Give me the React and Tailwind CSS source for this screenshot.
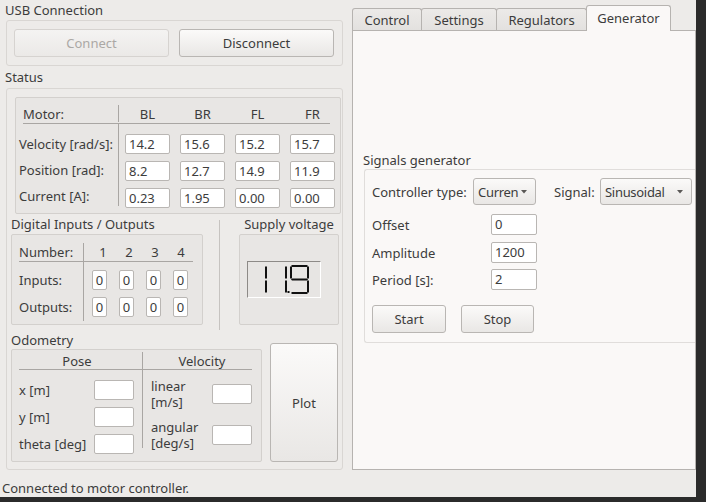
import React from "react";

function Btn({ children, className = "", disabled = false }) {
  return (
    <div
      className={`flex items-center justify-center rounded-[3px] border ${
        disabled
          ? "border-[#d6d3d0] text-[#aba8a5] bg-linear-to-b from-[#f4f3f2] to-[#ebe9e7]"
          : "border-[#b9b6b3] text-[#3c3c3c] bg-linear-to-b from-[#fbfaf9] to-[#e9e7e5]"
      } ${className}`}
    >
      {children}
    </div>
  );
}

function Field({ value = "", className = "", center = false }) {
  return (
    <div
      className={`bg-white border border-[#b9b6b3] rounded-[2px] flex items-center leading-none ${
        center ? "justify-center" : "pl-[3px]"
      } ${className}`}
    >
      {value}
    </div>
  );
}

function Combo({ text, className = "" }) {
  return (
    <div
      className={`h-[27px] flex items-center justify-between gap-[3px] rounded-[3px] border border-[#b9b6b3] bg-linear-to-b from-[#fbfaf9] to-[#e9e7e5] pl-[4px] ${className}`}
    >
      <span className="whitespace-nowrap tracking-[-0.3px]">{text}</span>
      <svg width="6" height="4" viewBox="0 0 6 4" className="shrink-0">
        <polygon points="0,0 6,0 3,3.5" fill="#5a5856" />
      </svg>
    </div>
  );
}

function V({ x, y1, y2 }) {
  return (
    <polygon
      points={`${x},${y1 + 1} ${x + 1},${y1} ${x + 2},${y1 + 1} ${x + 2},${y2 - 1} ${x + 1},${y2} ${x},${y2 - 1}`}
      fill="#111"
    />
  );
}
function H({ y, x1, x2 }) {
  return (
    <polygon
      points={`${x1 + 1},${y} ${x1},${y + 1} ${x1 + 1},${y + 2} ${x2 - 1},${y + 2} ${x2},${y + 1} ${x2 - 1},${y}`}
      fill="#111"
    />
  );
}

function LCD() {
  return (
    <div className="mt-[26px] ml-[7px] w-[74px] h-[37px] border border-t-[#8d8a87] border-l-[#8d8a87] border-r-white border-b-white bg-[#e7e5e3]">
      <svg width="72" height="35" viewBox="0 0 72 35">
        <V x={17} y1={4} y2={17} />
        <V x={17} y1={18} y2={31} />
        <V x={37} y1={4} y2={17} />
        <V x={37} y1={18} y2={31} />
        <rect x="39.5" y="29" width="2" height="2" fill="#111" />
        <H y={3} x1={43} x2={60} />
        <V x={42} y1={4} y2={17} />
        <V x={59} y1={4} y2={17} />
        <H y={16.5} x1={43} x2={60} />
        <V x={59} y1={18} y2={31} />
        <H y={30} x1={43} x2={60} />
      </svg>
    </div>
  );
}

const LINE = "bg-[#a9a6a3]";

function StatusTable() {
  const rows = [
    ["Velocity [rad/s]:", ["14.2", "15.6", "15.2", "15.7"]],
    ["Position [rad]:", ["8.2", "12.7", "14.9", "11.9"]],
    ["Current [A]:", ["0.23", "1.95", "0.00", "0.00"]],
  ];
  return (
    <div className="mt-[8px] ml-[8px] w-[326px] h-[117px] border border-[#d3d0cd] bg-[#e8e6e4] rounded-[2px]">
      <div className="mt-[7px] h-[17px] flex">
        <div className="w-[103px] border-r border-[#a9a6a3] pl-[7px] flex items-center">Motor:</div>
        <div className="ml-[6px] flex gap-[10px]">
          {["BL", "BR", "FL", "FR"].map((h) => (
            <div key={h} className="w-[45px] text-center flex items-center justify-center">
              {h}
            </div>
          ))}
        </div>
      </div>
      <div className={`mt-[1px] ml-[7px] w-[307px] h-px ${LINE}`} />
      <div className="flex">
        <div className="w-[103px] h-[82px] border-r border-[#a9a6a3] pt-[10px] flex flex-col gap-[7px]">
          {rows.map(([l]) => (
            <div key={l} className="h-[20px] pl-[3px] flex items-center whitespace-nowrap">
              {l}
            </div>
          ))}
        </div>
        <div className="ml-[6px] pt-[10px] flex flex-col gap-[7px]">
          {rows.map(([l, vals]) => (
            <div key={l} className="flex gap-[10px]">
              {vals.map((v, i) => (
                <Field key={i} value={v} className="w-[45px] h-[20px]" />
              ))}
            </div>
          ))}
        </div>
      </div>
    </div>
  );
}

function DIO() {
  const rows = ["Inputs:", "Outputs:"];
  return (
    <div className="w-[192px] flex flex-col">
      <div className="h-[20px] flex items-center whitespace-nowrap">Digital Inputs / Outputs</div>
      <div className="h-[91px] border border-[#d3d0cd] bg-[#e8e6e4] rounded-[2px]">
        <div className="mt-[8px] h-[18px] flex">
          <div className="w-[72px] border-r border-[#a9a6a3] pl-[7px] flex items-center">Number:</div>
          <div className="ml-[6px] flex">
            {["1", "2", "3", "4"].map((n) => (
              <div key={n} className="w-[26px] text-center flex items-center justify-center">
                {n}
              </div>
            ))}
          </div>
        </div>
        <div className={`ml-[7px] w-[174px] h-px ${LINE}`} />
        <div className="flex">
          <div className="w-[72px] h-[59px] border-r border-[#a9a6a3] pt-[8px] flex flex-col gap-[7px]">
            {rows.map((r) => (
              <div key={r} className="h-[20px] pl-[7px] flex items-center">
                {r}
              </div>
            ))}
          </div>
          <div className="ml-[8px] pt-[8px] flex flex-col gap-[7px]">
            {rows.map((r) => (
              <div key={r} className="flex gap-[12px]">
                {[0, 1, 2, 3].map((i) => (
                  <Field key={i} value="0" center className="w-[15px] h-[20px]" />
                ))}
              </div>
            ))}
          </div>
        </div>
      </div>
    </div>
  );
}

function Odometry() {
  return (
    <div className="w-[251px] flex flex-col">
      <div className="h-[19px] flex items-center">Odometry</div>
      <div className="h-[113px] border border-[#d3d0cd] bg-[#e8e6e4] rounded-[2px]">
        <div className="mt-[2px] h-[17px] flex">
          <div className="w-[131px] border-r border-[#a9a6a3] flex items-center justify-center">Pose</div>
          <div className="flex-1 flex items-center justify-center">Velocity</div>
        </div>
        <div className={`ml-[7px] w-[233px] h-px ${LINE}`} />
        <div className="flex">
          <div className="w-[131px] h-[78px] border-r border-[#a9a6a3] pt-[10px] flex flex-col gap-[7px]">
            {["x [m]", "y [m]", "theta [deg]"].map((l) => (
              <div key={l} className="h-[20px] pl-[7px] pr-[8px] flex items-center justify-between">
                <span className="whitespace-nowrap">{l}</span>
                <Field className="w-[40px] h-[20px]" />
              </div>
            ))}
          </div>
          <div className="flex-1 pl-[8px] pr-[9px] pt-[8px] flex flex-col gap-[9px]">
            {["linear\n[m/s]", "angular\n[deg/s]"].map((t) => (
              <div key={t} className="h-[32px] flex items-center justify-between">
                <div className="leading-[16px] whitespace-pre-line">{t}</div>
                <Field className="w-[40px] h-[20px]" />
              </div>
            ))}
          </div>
        </div>
      </div>
    </div>
  );
}

function Left() {
  return (
    <div className="w-[352px] flex flex-col">
      <div className="h-[20px] pl-[5px] flex items-center">USB Connection</div>
      <div className="ml-[6px] w-[337px] h-[46px] border border-[#d9d6d3] rounded-[3px] flex items-center pl-[7px] gap-[10px]">
        <Btn disabled className="w-[155px] h-[28px]">Connect</Btn>
        <Btn className="w-[155px] h-[28px]">Disconnect</Btn>
      </div>
      <div className="h-[22px] pl-[5px] flex items-center">Status</div>
      <div className="ml-[6px] w-[337px] h-[382px] border border-[#d9d6d3] rounded-[3px] flex flex-col">
        <StatusTable />
        <div className="ml-[4px] flex items-start">
          <DIO />
          <div className="ml-[16px] mt-[6px] w-px h-[110px] bg-[#c6c3c0]" />
          <div className="ml-[19px] w-[100px] flex flex-col">
            <div className="h-[20px] flex items-center justify-center whitespace-nowrap">Supply voltage</div>
            <div className="h-[91px] border border-[#d3d0cd] bg-[#e8e6e4] rounded-[2px]">
              <LCD />
            </div>
          </div>
        </div>
        <div className="ml-[4px] flex items-end">
          <Odometry />
          <Btn className="ml-[8px] w-[68px] h-[119px]">Plot</Btn>
        </div>
      </div>
    </div>
  );
}

function Right() {
  const tab = "h-[22px] border border-b-0 border-[#b6b3b0] rounded-t-[3px] bg-linear-to-b from-[#eceae8] to-[#e3e1df] flex items-center justify-center";
  return (
    <div className="w-[344px] flex flex-col">
      <div className="h-[30px] flex items-end">
        <div className={`${tab} w-[70px]`}>Control</div>
        <div className={`${tab} -ml-px w-[76px]`}>Settings</div>
        <div className={`${tab} -ml-px w-[91px]`}>Regulators</div>
        <div className="-ml-px w-[85px] h-[26px] mb-[-1px] relative z-10 border border-b-0 border-[#b6b3b0] rounded-t-[3px] bg-[#faf8f7] flex items-center justify-center pb-[2px]">
          Generator
        </div>
      </div>
      <div className="h-[440px] border border-[#b6b3b0] bg-[#faf8f7] flex flex-col">
        <div className="mt-[119px] ml-[10px] h-[19px] flex items-center">Signals generator</div>
        <div className="ml-[11px] h-[174px] border border-r-0 border-[#e0dddb] rounded-l-[3px] flex flex-col">
          <div className="mt-[8px] h-[27px] flex items-center">
            <div className="w-[108px] pl-[7px] whitespace-nowrap">Controller type:</div>
            <Combo text="Curren" className="w-[63px] pr-[8px]" />
            <div className="ml-[18px] w-[46px]">Signal:</div>
            <Combo text="Sinusoidal" className="w-[92px] pr-[8px]" />
          </div>
          {[
            ["Offset", "0", "mt-[9px]"],
            ["Amplitude", "1200", "mt-[7px]"],
            ["Period [s]:", "2", "mt-[6px]"],
          ].map(([l, v, m]) => (
            <div key={l} className={`${m} h-[21px] flex items-center`}>
              <div className="w-[126px] pl-[7px]">{l}</div>
              <Field value={v} className="w-[46px] h-[21px]" />
            </div>
          ))}
          <div className="mt-[15px] flex">
            <Btn className="ml-[7px] w-[74px] h-[28px]">Start</Btn>
            <Btn className="ml-[15px] w-[73px] h-[28px]">Stop</Btn>
          </div>
        </div>
      </div>
    </div>
  );
}

export default function App() {
  return (
    <div className="w-[706px] h-[502px] bg-[#2b2b2b] overflow-hidden">
      <div className="w-[696px] h-[497px] bg-[#edebe9] flex flex-col font-['Noto_Sans',sans-serif] text-[13px] text-[#3c3c3c] leading-[18px]">
        <div className="flex h-[470px]">
          <Left />
          <Right />
        </div>
        <div className="h-[27px] pt-[9px] pl-[2px] flex items-center">Connected to motor controller.</div>
      </div>
    </div>
  );
}
